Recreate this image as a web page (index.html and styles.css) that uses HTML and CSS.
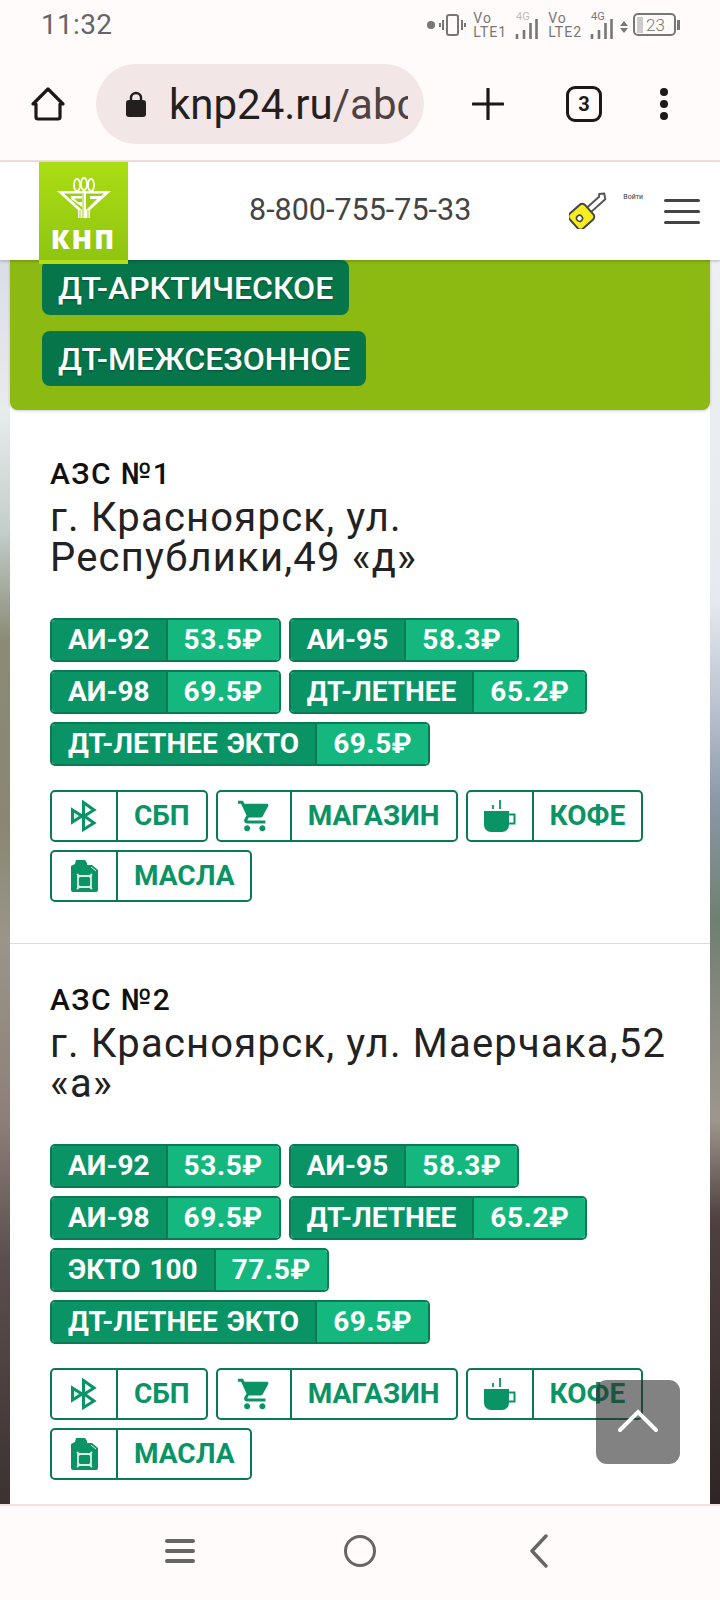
FILE: index.html
```html
<!DOCTYPE html>
<html lang="ru">
<head>
    <meta charset="UTF-8">
    <meta name="viewport" content="width=device-width, initial-scale=1.0">
    <title>КНП — АЗС</title>
    <link rel="stylesheet" href="styles.css">
</head>
<body>
    <div class="phone">
        <div class="status">
            <span class="clock">11:32</span>
            <div class="status-icons">
                <span class="dot"></span>
                <svg class="vibrate" width="27" height="22" viewBox="0 0 27 22"><rect x="8" y="1" width="11" height="20" rx="2" fill="none" stroke="#777" stroke-width="2"/><path d="M4 6v10M1 9v4M23 6v10M26 9v4" stroke="#777" stroke-width="2"/></svg>
                <span class="volte">Vo<br>LTE1</span>
                <svg class="signal" width="22" height="28" viewBox="0 0 22 28"><text x="0" y="9" class="net net-light">4G</text><path d="M1 28v-5M8 28v-9M14.500 28v-16M20.500 28v-20" stroke="#777" stroke-width="2.600"/></svg>
                <span class="volte">Vo<br>LTE2</span>
                <svg class="signal" width="22" height="28" viewBox="0 0 22 28"><text x="0" y="9" class="net">4G</text><path d="M1 28v-5M8 28v-9M14.500 28v-16M20.500 28v-20" stroke="#777" stroke-width="2.600"/></svg>
                <svg class="arrows" width="8" height="12" viewBox="0 0 8 12"><path d="M4 0l4 5H0zM4 12l4-5H0z" fill="#777"/></svg>
                <div class="battery"><span class="battery-level"></span>23</div>
                <span class="battery-nub"></span>
            </div>
        </div>

        <div class="browser">
            <svg class="home" width="36" height="36" viewBox="0 0 36 36"><path d="M18 3L33 18H30V31a2 2 0 0 1-2 2H8a2 2 0 0 1-2-2V18H3Z" fill="none" stroke="#1c1818" stroke-width="3.200" stroke-linejoin="round"/></svg>
            <div class="url-pill">
                <svg class="lock" width="20" height="26" viewBox="0 0 20 26"><path d="M5 11V7a5 5 0 0 1 10 0v4" fill="none" stroke="#241f1f" stroke-width="2.400"/><rect y="9" width="20" height="17" rx="3" fill="#241f1f"/></svg>
                <div class="url"><b>knp24.ru</b>/abc</div>
            </div>
            <svg class="plus" width="32" height="32" viewBox="0 0 32 32"><path d="M16 1v30M1 16h30" stroke="#1c1818" stroke-width="3.200" stroke-linecap="round"/></svg>
            <div class="tabs">3</div>
            <div class="menu-dots"><span></span><span></span><span></span></div>
        </div>

        <header class="site-header">
            <div class="logo">
                <svg width="54" height="42" viewBox="0 0 54 42">
                    <g fill="none" stroke="#fff" stroke-width="1.800">
                        <ellipse cx="20" cy="8" rx="3" ry="6"/>
                        <ellipse cx="27" cy="7" rx="3" ry="6"/>
                        <ellipse cx="34" cy="8" rx="3" ry="6"/>
                    </g>
                    <path d="M0 14H54L33 33V41H21V33Z" fill="#fff"/>
                    <path d="M7 16.500H25V19H14V22L25 30V33ZM47 16.500H29V33L40 22H33V19H44ZM17 21.500H25V25H21Z" fill="#9ccf14"/>
                    <path d="M26 16V41M23 33V41M31 33V41" stroke="#9ccf14" stroke-width="1"/>
                </svg>
                <span class="logo-text">КНП</span>
            </div>
            <a class="phone-number">8-800-755-75-33</a>
            <svg class="key" width="38" height="38" viewBox="0 0 38 38">
                <g transform="translate(12 26) rotate(-42)">
                    <path d="M8 -3H27L29 -5L33 -2L30 3H8Z" fill="#fff" stroke="#555" stroke-width="2" stroke-linejoin="round"/>
                    <rect x="-10" y="-10" width="21" height="20" rx="4" fill="#f6ee1e" stroke="#444" stroke-width="2"/>
                    <circle cx="-2" cy="0" r="3" fill="#fff" stroke="#444" stroke-width="1.500"/>
                </g>
            </svg>
            <span class="login">Войти</span>
            <div class="burger"><span></span><span></span><span></span></div>
        </header>

        <main class="main">
            <section class="fuel-panel">
                <a class="fuel-btn">ДТ-АРКТИЧЕСКОЕ</a>
                <a class="fuel-btn">ДТ-МЕЖСЕЗОННОЕ</a>
            </section>

            <section class="stations">
                <article class="station station-first">
                    <div class="station-num">АЗС №1</div>
                    <div class="station-addr">г. Красноярск, ул. Республики,49 «д»</div>
                    <div class="prices">
                        <div class="price"><span class="price-name">АИ-92</span><span class="price-val">53.5₽</span></div>
                        <div class="price"><span class="price-name">АИ-95</span><span class="price-val">58.3₽</span></div>
                        <div class="price"><span class="price-name">АИ-98</span><span class="price-val">69.5₽</span></div>
                        <div class="price"><span class="price-name">ДТ-ЛЕТНЕЕ</span><span class="price-val">65.2₽</span></div>
                        <div class="price"><span class="price-name">ДТ-ЛЕТНЕЕ ЭКТО</span><span class="price-val">69.5₽</span></div>
                    </div>
                    <div class="services">
                        <div class="service">
                            <span class="service-icon"><svg width="26" height="32" viewBox="0 0 26 32"><path d="M1.500 10L11 16L1.500 22Z" fill="#d8efe5" stroke="#0a9465" stroke-width="3"/><path d="M12.500 2.500L23 10L12.500 16.500ZM12.500 15.500L23 23L12.500 29.500Z" fill="none" stroke="#0a9465" stroke-width="3"/></svg></span>
                            <span class="service-name">СБП</span>
                        </div>
                        <div class="service">
                            <span class="service-icon service-icon-wide"><svg width="32" height="32" viewBox="1 2 21 20"><path d="M7 18c-1.100 0-1.990.9-1.990 2S5.900 22 7 22s2-.9 2-2-.9-2-2-2zM1 2v2h2l3.600 7.590-1.350 2.450c-.16.280-.25.610-.25.960 0 1.100.9 2 2 2h12v-2H7.420c-.14 0-.25-.11-.25-.25l.03-.12.9-1.630h7.450c.750 0 1.410-.41 1.750-1.030l3.580-6.490c.08-.14.12-.31.12-.48 0-.55-.45-1-1-1H5.210l-.94-2H1zm16 16c-1.100 0-1.990.9-1.990 2s.89 2 1.990 2 2-.9 2-2-.9-2-2-2z" fill="#0a9465"/></svg></span>
                            <span class="service-name">МАГАЗИН</span>
                        </div>
                        <div class="service">
                            <span class="service-icon"><svg width="32" height="32" viewBox="0 0 32 32"><path d="M0 11H25V25a7 7 0 0 1-7 7H7a7 7 0 0 1-7-7Z" fill="#0a9465"/><path d="M25 14.500H30.500V23.500H25" fill="none" stroke="#0a9465" stroke-width="2"/><path d="M16 0V9M9 5V9" stroke="#0a9465" stroke-width="1.800"/></svg></span>
                            <span class="service-name">КОФЕ</span>
                        </div>
                        <div class="service">
                            <span class="service-icon"><svg width="27" height="32" viewBox="0 0 27 32"><path d="M5 0H14L16 3V5H21L27 10V30a2 2 0 0 1-2 2H2a2 2 0 0 1-2-2V6L4 4Z" fill="#0a9465"/><path d="M7 16H20V27H7ZM6 14L9 17M21 14L18 17M6 29L9 26M21 29L18 26" fill="none" stroke="#d8efe5" stroke-width="1.800"/><path d="M20 7L25 11" stroke="#d8efe5" stroke-width="1"/></svg></span>
                            <span class="service-name">МАСЛА</span>
                        </div>
                    </div>
                </article>

                <article class="station">
                    <div class="station-num">АЗС №2</div>
                    <div class="station-addr">г. Красноярск, ул. Маерчака,52 «а»</div>
                    <div class="prices">
                        <div class="price"><span class="price-name">АИ-92</span><span class="price-val">53.5₽</span></div>
                        <div class="price"><span class="price-name">АИ-95</span><span class="price-val">58.3₽</span></div>
                        <div class="price"><span class="price-name">АИ-98</span><span class="price-val">69.5₽</span></div>
                        <div class="price"><span class="price-name">ДТ-ЛЕТНЕЕ</span><span class="price-val">65.2₽</span></div>
                        <div class="price"><span class="price-name">ЭКТО 100</span><span class="price-val">77.5₽</span></div>
                        <div class="price"><span class="price-name">ДТ-ЛЕТНЕЕ ЭКТО</span><span class="price-val">69.5₽</span></div>
                    </div>
                    <div class="services">
                        <div class="service">
                            <span class="service-icon"><svg width="26" height="32" viewBox="0 0 26 32"><path d="M1.500 10L11 16L1.500 22Z" fill="#d8efe5" stroke="#0a9465" stroke-width="3"/><path d="M12.500 2.500L23 10L12.500 16.500ZM12.500 15.500L23 23L12.500 29.500Z" fill="none" stroke="#0a9465" stroke-width="3"/></svg></span>
                            <span class="service-name">СБП</span>
                        </div>
                        <div class="service">
                            <span class="service-icon service-icon-wide"><svg width="32" height="32" viewBox="1 2 21 20"><path d="M7 18c-1.100 0-1.990.9-1.990 2S5.900 22 7 22s2-.9 2-2-.9-2-2-2zM1 2v2h2l3.600 7.590-1.350 2.450c-.16.280-.25.610-.25.960 0 1.100.9 2 2 2h12v-2H7.420c-.14 0-.25-.11-.25-.25l.03-.12.9-1.630h7.450c.750 0 1.410-.41 1.750-1.030l3.580-6.490c.08-.14.12-.31.12-.48 0-.55-.45-1-1-1H5.210l-.94-2H1zm16 16c-1.100 0-1.990.9-1.990 2s.89 2 1.990 2 2-.9 2-2-.9-2-2-2z" fill="#0a9465"/></svg></span>
                            <span class="service-name">МАГАЗИН</span>
                        </div>
                        <div class="service">
                            <span class="service-icon"><svg width="32" height="32" viewBox="0 0 32 32"><path d="M0 11H25V25a7 7 0 0 1-7 7H7a7 7 0 0 1-7-7Z" fill="#0a9465"/><path d="M25 14.500H30.500V23.500H25" fill="none" stroke="#0a9465" stroke-width="2"/><path d="M16 0V9M9 5V9" stroke="#0a9465" stroke-width="1.800"/></svg></span>
                            <span class="service-name">КОФЕ</span>
                        </div>
                        <div class="service">
                            <span class="service-icon"><svg width="27" height="32" viewBox="0 0 27 32"><path d="M5 0H14L16 3V5H21L27 10V30a2 2 0 0 1-2 2H2a2 2 0 0 1-2-2V6L4 4Z" fill="#0a9465"/><path d="M7 16H20V27H7ZM6 14L9 17M21 14L18 17M6 29L9 26M21 29L18 26" fill="none" stroke="#d8efe5" stroke-width="1.800"/><path d="M20 7L25 11" stroke="#d8efe5" stroke-width="1"/></svg></span>
                            <span class="service-name">МАСЛА</span>
                        </div>
                    </div>
                </article>
            </section>

            <a class="to-top"><svg width="40" height="24" viewBox="0 0 40 24"><path d="M2 21L20 3L38 21" fill="none" stroke="#fff" stroke-width="4" stroke-linecap="round"/></svg></a>
        </main>

        <nav class="nav-bar">
            <div class="nav-burger"><span></span><span></span><span></span></div>
            <span class="nav-home"></span>
            <svg class="nav-back" width="20" height="34" viewBox="0 0 20 34"><path d="M17 2L3 17L17 32" fill="none" stroke="#666" stroke-width="3.400" stroke-linecap="round" stroke-linejoin="round"/></svg>
        </nav>
    </div>
</body>
</html>
```

FILE: styles.css
```css
* {
    box-sizing: border-box;
}
body {
    margin: 0;
    font-family: Roboto, "Noto Sans", sans-serif;
    background: #fff;
}
.phone {
    width: 720px;
    height: 1600px;
    display: flex;
    flex-direction: column;
    overflow: hidden;
}

/* status bar */
.status {
    height: 53px;
    flex: none;
    display: flex;
    align-items: center;
    justify-content: space-between;
    padding: 0 40px 4px 41px;
    background: #fffbfa;
}
.clock {
    font-size: 28px;
    color: #666;
    letter-spacing: .3px;
}
.status-icons {
    display: flex;
    align-items: center;
    gap: 7px;
}
.dot {
    width: 8px;
    height: 8px;
    border-radius: 50%;
    background: #777;
}
.vibrate {
    margin-left: -3px;
}
.volte {
    font-size: 14px;
    line-height: 14px;
    letter-spacing: 1px;
    color: #777;
}
.signal {
    margin: 0 3px 0 2px;
    overflow: visible;
}
.net {
    font-family: Roboto, sans-serif;
    font-size: 11px;
    fill: #777;
}
.net-light {
    fill: #bbb;
}
.arrows {
    margin: 4px -2px 0 -3px;
}
.battery {
    width: 43px;
    height: 23px;
    border: 2px solid #777;
    border-radius: 5px;
    display: flex;
    align-items: center;
    gap: 3px;
    padding-left: 2px;
    font-size: 17px;
    font-weight: 300;
    color: #777;
}
.battery-level {
    width: 6px;
    height: 16px;
    background: #ccc;
}
.battery-nub {
    width: 3px;
    height: 10px;
    margin-left: -6px;
    background: #777;
}

/* browser toolbar */
.browser {
    height: 109px;
    flex: none;
    display: flex;
    align-items: center;
    padding: 0 0 5px 30px;
    background: #fffbfa;
    border-bottom: 2px solid #f3e2df;
}
.url-pill {
    width: 328px;
    height: 80px;
    margin-left: 30px;
    display: flex;
    align-items: center;
    padding-left: 30px;
    border-radius: 40px;
    background: #f3e6e6;
}
.lock {
    flex: none;
}
.url {
    width: 239px;
    margin-left: 23px;
    overflow: hidden;
    white-space: nowrap;
    font-size: 42px;
    color: #4e4343;
}
.url b {
    font-weight: 400;
    color: #241f1f;
}
.plus {
    margin-left: 48px;
}
.tabs {
    width: 36px;
    height: 36px;
    margin-left: 62px;
    border: 3.500px solid #1c1818;
    border-radius: 9px;
    display: flex;
    align-items: center;
    justify-content: center;
    font-size: 20px;
    font-weight: 700;
    color: #1c1818;
}
.menu-dots {
    margin-left: 58px;
    display: flex;
    flex-direction: column;
    gap: 4px;
}
.menu-dots span {
    width: 8px;
    height: 8px;
    border-radius: 50%;
    background: #1c1818;
}

/* site header */
.site-header {
    position: relative;
    z-index: 2;
    height: 98px;
    flex: none;
    display: flex;
    align-items: center;
    background: #fff;
    box-shadow: 0 1px 3px rgba(0, 0, 0, .25);
}
.logo {
    position: absolute;
    left: 39px;
    top: 0;
    width: 89px;
    height: 102px;
    display: flex;
    flex-direction: column;
    align-items: center;
    padding-top: 15px;
    background: linear-gradient(#abdd14, #8fc510);
    border-bottom: 4px solid #b4dc14;
}
.logo-text {
    margin-top: 3px;
    font-family: "Open Sans", sans-serif;
    font-size: 27px;
    line-height: 34px;
    font-weight: 800;
    letter-spacing: 2px;
    color: #fff;
}
.phone-number {
    margin-left: 249px;
    margin-bottom: 4px;
    font-size: 30.500px;
    color: #444;
}
.key {
    margin-left: 98px;
    margin-bottom: 2px;
}
.login {
    margin-left: 16px;
    margin-bottom: 28px;
    font-size: 7px;
    color: #333;
}
.burger {
    margin-left: 21px;
    display: flex;
    flex-direction: column;
    gap: 8px;
}
.burger span {
    display: block;
    width: 36px;
    height: 3px;
    border-radius: 2px;
    background: #444;
}

/* page content */
.main {
    position: relative;
    flex: 1;
    min-height: 0;
    overflow: hidden;
    padding: 0 10px;
    background:
        linear-gradient(#d9dde8 0, #e8ecec 150px, #c3cfcb 270px, #8b8b74 380px, #8a8672 560px, #9a9588 680px, #8e7f78 860px, #5c4e4e 1000px, #3c3232 1244px) left / 10px 100% no-repeat,
        linear-gradient(#eef0f2 0, #e6eaf0 340px, #b4bdcc 460px, #8c98a8 540px, #6f8070 660px, #8a8a80 760px, #9d968c 860px, #504040 960px, #2e2626 1244px) right / 10px 100% no-repeat;
}
.fuel-panel {
    display: flex;
    flex-direction: column;
    align-items: flex-start;
    gap: 16px;
    padding: 0 0 24px 32px;
    border-radius: 0 0 8px 8px;
    background: #8cba12;
    box-shadow: 0 1px 3px rgba(0, 0, 0, .2);
    position: relative;
}
.fuel-btn {
    height: 55px;
    display: flex;
    align-items: center;
    padding: 0 16px;
    border-radius: 8px;
    background: #06754a;
    font-size: 32px;
    font-weight: 500;
    color: #fff;
    text-shadow: 0 1px 2px rgba(0, 0, 0, .3);
}
.stations {
    background: #fff;
}
.station {
    padding: 40px 40px 41px;
}
.station-first {
    padding-top: 48px;
    border-bottom: 1px solid #ddd;
}
.station-num {
    font-size: 30px;
    line-height: 32px;
    font-weight: 500;
    letter-spacing: 1.400px;
    color: #111;
}
.station-addr {
    margin-top: 8px;
    font-size: 40px;
    line-height: 40px;
    letter-spacing: 1.200px;
    color: #222;
}
.prices,
.services {
    display: flex;
    flex-wrap: wrap;
}
.prices {
    gap: 8px;
    margin-top: 40px;
}
.price {
    display: flex;
    height: 44px;
    border: 2px solid #0a7a55;
    border-radius: 5px;
    overflow: hidden;
    font-size: 28px;
    line-height: 40px;
    font-weight: 700;
    color: #fff;
}
.price-name {
    padding: 0 16px;
    background: #0a9465;
    border-right: 2px solid #0a7a55;
    white-space: nowrap;
    word-spacing: 2px;
}
.price-val {
    padding: 0 16px;
    background: #14b87f;
    letter-spacing: .6px;
}
.services {
    gap: 8px;
    margin-top: 24px;
}
.service {
    display: flex;
    height: 52px;
    border: 2px solid #0a7a55;
    border-radius: 5px;
    font-size: 28px;
    line-height: 48px;
    font-weight: 700;
    color: #0a9465;
}
.service-icon {
    width: 66px;
    display: flex;
    align-items: center;
    justify-content: center;
    border-right: 2px solid #0a7a55;
}
.service-icon-wide {
    width: 74px;
}
.service-name {
    padding: 0 16px;
}
.to-top {
    position: absolute;
    right: 40px;
    top: 1120px;
    width: 84px;
    height: 84px;
    display: flex;
    align-items: center;
    justify-content: center;
    padding-bottom: 3px;
    border-radius: 11px;
    background: rgba(40, 40, 40, .58);
}

/* android nav */
.nav-bar {
    height: 96px;
    flex: none;
    display: flex;
    align-items: center;
    padding: 0 0 4px 164px;
    background: #fffbfa;
    border-top: 2px solid #f3e2df;
}
.nav-burger {
    display: flex;
    flex-direction: column;
    align-items: center;
    gap: 6px;
    width: 32px;
}
.nav-burger span {
    display: block;
    width: 30px;
    height: 4px;
    border-radius: 2px;
    background: #666;
}
.nav-home {
    width: 32px;
    height: 32px;
    margin-left: 148px;
    border: 3.500px solid #666;
    border-radius: 50%;
}
.nav-back {
    margin-left: 153px;
}
```
